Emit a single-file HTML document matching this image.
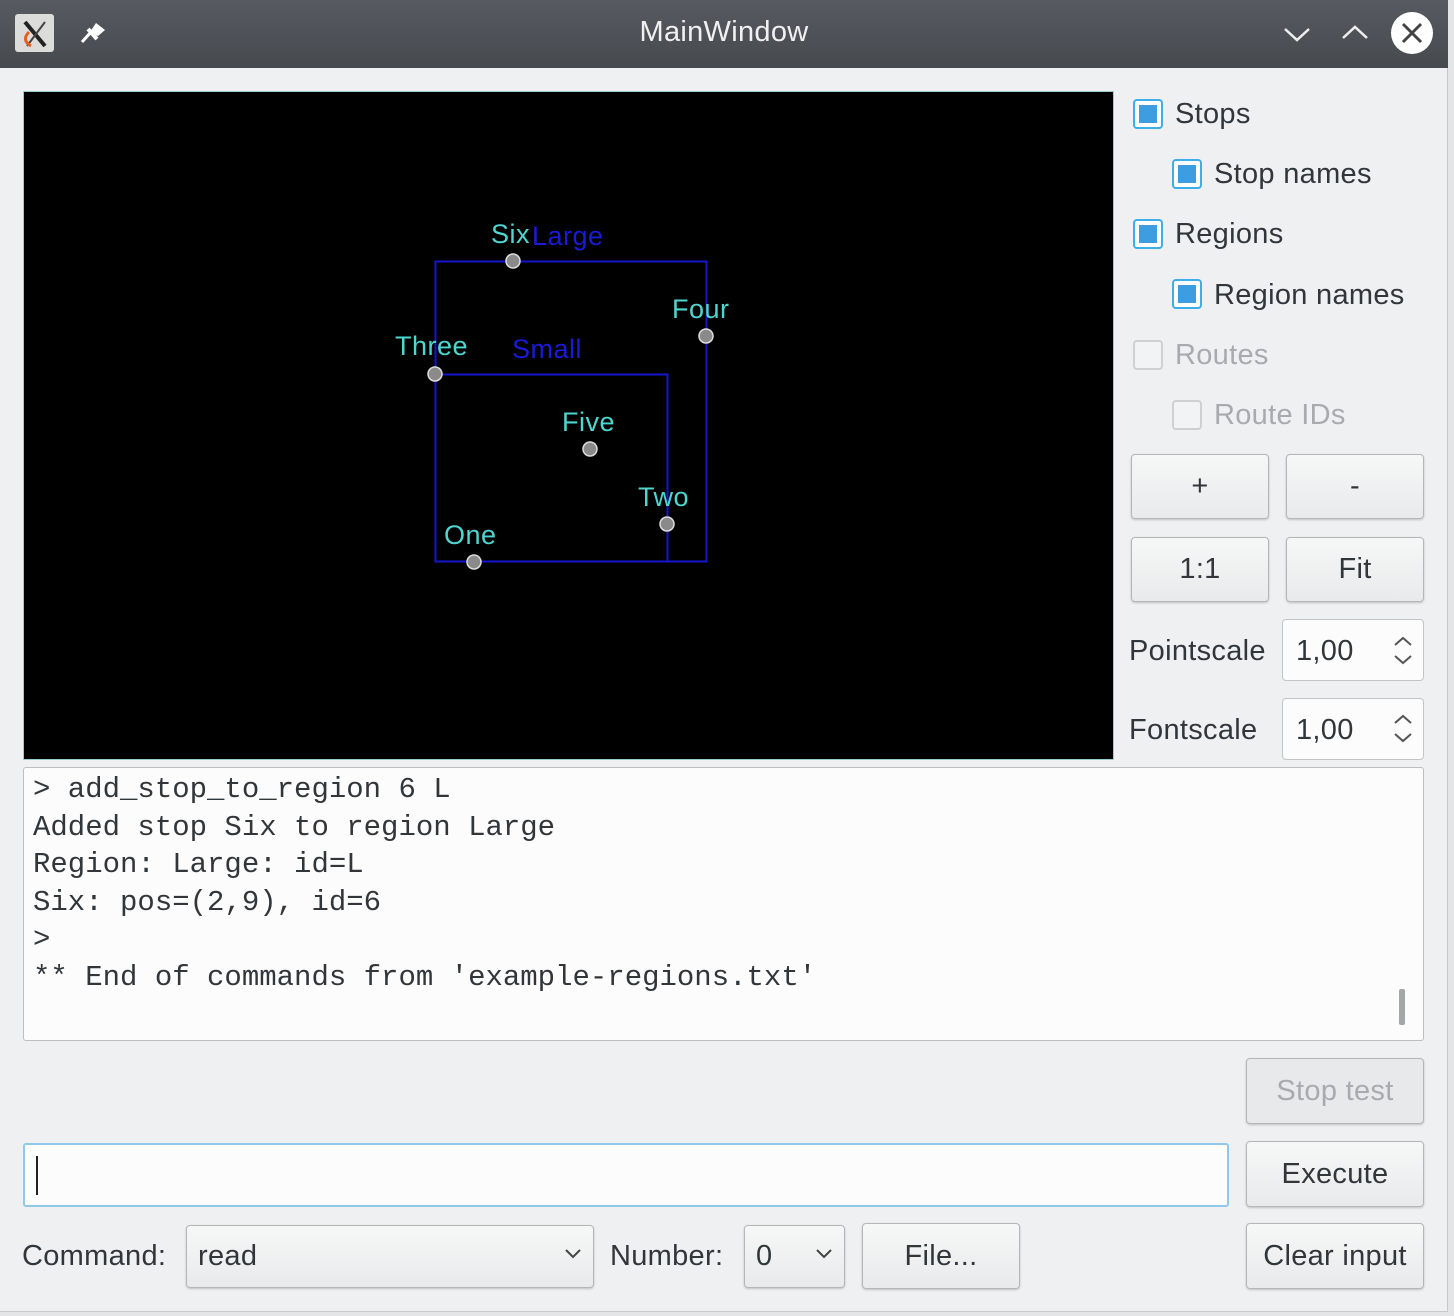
<!DOCTYPE html>
<html><head><meta charset="utf-8"><style>
*{margin:0;padding:0;box-sizing:border-box}
body{width:1454px;height:1316px;background:#e4e5e6;position:relative;overflow:hidden;font-family:"Liberation Sans","DejaVu Sans",sans-serif;color:#31363b}
.a{position:absolute}
#win{left:0;top:0;width:1448px;height:1312px;background:#eff0f1;border-right:1px solid #c8c9ca;border-bottom:1px solid #c8c9ca}
#title{left:0;top:0;width:1448px;height:68px;background:linear-gradient(#575b61,#464a4f)}
.t{font-size:29px;letter-spacing:0.3px;white-space:nowrap}
.cb{width:30px;height:30px;border:2px solid #3daee9;border-radius:4px;background:#fff}
.cb::after{content:"";position:absolute;left:4px;top:4px;width:18px;height:18px;background:#3d9de0}
.cbd{width:30px;height:30px;border:2px solid #cfd0d1;border-radius:4px;background:#f2f3f4}
.btn{border:1px solid #b4b6b8;border-radius:4px;background:linear-gradient(#f6f7f7,#e9eaeb);box-shadow:0 1px 2px rgba(0,0,0,.2);display:flex;align-items:center;justify-content:center;font-size:29px;letter-spacing:0.3px}
.inp{background:#fcfcfc;border:1px solid #c2c4c6;border-radius:4px}
.mono{font-family:"Liberation Mono",monospace;font-size:29px;line-height:37.5px;white-space:pre;color:#31363b}
.lbl{fill:#4fd6d0;font-family:"Liberation Sans",sans-serif;font-size:27px;letter-spacing:0.5px}
</style></head><body>
<div id="win" class="a"></div>
<div id="title" class="a"></div>
<div class="a" style="left:15px;top:14px;width:39px;height:38px;background:#dcdcda;border-radius:3px"></div>
<svg class="a" style="left:15px;top:14px" width="39" height="38"><path d="M10 8 L30 32" stroke="#222" stroke-width="4"/><path d="M30 8 L12 32" stroke="#444" stroke-width="2"/><path d="M14 18 Q6 26 16 32" stroke="#e06020" stroke-width="3" fill="none"/></svg>
<svg class="a" style="left:78px;top:20px" width="30" height="26"><path d="M18 3 L27 10 L20 16 L12 12 Z" fill="#fff"/><path d="M13 12 L4 22" stroke="#fff" stroke-width="3"/><path d="M10 9 L19 19" stroke="#fff" stroke-width="4"/></svg>
<div class="a t" style="left:0;width:1448px;top:16px;text-align:center;color:#f0f0f0;font-size:29px">MainWindow</div>
<svg class="a" style="left:1282px;top:24px" width="30" height="20"><path d="M3 5 L15 16 L27 5" stroke="#eee" stroke-width="2.5" fill="none"/></svg>
<svg class="a" style="left:1340px;top:22px" width="30" height="20"><path d="M3 16 L15 5 L27 16" stroke="#eee" stroke-width="2.5" fill="none"/></svg>
<svg class="a" style="left:1390px;top:11px" width="44" height="44"><circle cx="22" cy="22" r="21" fill="#fff"/><path d="M13 13 L31 31 M31 13 L13 31" stroke="#444" stroke-width="3"/></svg>

<div class="a" style="left:23px;top:91px;width:1091px;height:669px;background:#000;border:1px solid #9cc"></div>
<svg class="a" style="left:24px;top:92px" width="1089" height="667">
<rect x="411.5" y="169.5" width="271" height="300" fill="none" stroke="#1515d0" stroke-width="2"/>
<rect x="411.5" y="282.5" width="232" height="187" fill="none" stroke="#1515d0" stroke-width="2"/>
<text x="508" y="153" font-size="27" fill="#1a1ad8" font-family="Liberation Sans" letter-spacing="0.5">Large</text>
<text x="488" y="266" font-size="27" fill="#1a1ad8" font-family="Liberation Sans" letter-spacing="0.5">Small</text>
<text class="lbl" x="467" y="151">Six</text>
<text class="lbl" x="648" y="226">Four</text>
<text class="lbl" x="371" y="263">Three</text>
<text class="lbl" x="538" y="339">Five</text>
<text class="lbl" x="614" y="414">Two</text>
<text class="lbl" x="420" y="452">One</text>
<g fill="#8a8a8a" stroke="#ddd" stroke-width="1.5">
<circle cx="489" cy="169" r="7"/><circle cx="682" cy="244" r="7"/><circle cx="411" cy="282" r="7"/><circle cx="566" cy="357" r="7"/><circle cx="643" cy="432" r="7"/><circle cx="450" cy="470" r="7"/></g>
</svg>

<div class="a cb" style="left:1133px;top:99px"></div><div class="a t" style="left:1175px;top:98px">Stops</div>
<div class="a cb" style="left:1172px;top:159px"></div><div class="a t" style="left:1214px;top:158px">Stop names</div>
<div class="a cb" style="left:1133px;top:219px"></div><div class="a t" style="left:1175px;top:218px">Regions</div>
<div class="a cb" style="left:1172px;top:279px"></div><div class="a t" style="left:1214px;top:279px">Region names</div>
<div class="a cbd" style="left:1133px;top:340px"></div><div class="a t" style="left:1175px;top:339px;color:#a8abad">Routes</div>
<div class="a cbd" style="left:1172px;top:400px"></div><div class="a t" style="left:1214px;top:399px;color:#a8abad">Route IDs</div>

<div class="a btn" style="left:1131px;top:454px;width:138px;height:65px">+</div>
<div class="a btn" style="left:1286px;top:454px;width:138px;height:65px">-</div>
<div class="a btn" style="left:1131px;top:537px;width:138px;height:65px">1:1</div>
<div class="a btn" style="left:1286px;top:537px;width:138px;height:65px">Fit</div>
<div class="a t" style="left:1129px;top:635px">Pointscale</div>
<div class="a inp" style="left:1282px;top:619px;width:142px;height:62px"></div>
<div class="a t" style="left:1296px;top:635px">1,00</div>
<svg class="a" style="left:1390px;top:634px" width="26" height="34"><path d="M5 11 L13 4 L21 11 M5 22 L13 29 L21 22" stroke="#555" stroke-width="2" fill="none"/></svg>
<div class="a t" style="left:1129px;top:714px">Fontscale</div>
<div class="a inp" style="left:1282px;top:698px;width:142px;height:62px"></div>
<div class="a t" style="left:1296px;top:714px">1,00</div>
<svg class="a" style="left:1390px;top:712px" width="26" height="34"><path d="M5 11 L13 4 L21 11 M5 22 L13 29 L21 22" stroke="#555" stroke-width="2" fill="none"/></svg>

<div class="a" style="left:23px;top:767px;width:1401px;height:274px;background:#fcfcfc;border:1px solid #bcbec0;border-radius:3px"></div>
<div class="a mono" style="left:33px;top:771px">&gt; add_stop_to_region 6 L
Added stop Six to region Large
Region: Large: id=L
Six: pos=(2,9), id=6
&gt;
** End of commands from 'example-regions.txt'</div>
<div class="a" style="left:1399px;top:989px;width:6px;height:36px;background:#a4a6a8;border-radius:2px"></div>

<div class="a btn" style="left:1246px;top:1058px;width:178px;height:66px;color:#a8abad;background:#e8e9ea">Stop test</div>
<div class="a" style="left:23px;top:1143px;width:1206px;height:64px;background:#fcfcfc;border:2px solid #8fc8e8;border-radius:3px"></div>
<div class="a" style="left:36px;top:1156px;width:2px;height:39px;background:#222"></div>
<div class="a btn" style="left:1246px;top:1141px;width:178px;height:66px">Execute</div>
<div class="a t" style="left:22px;top:1240px">Command:</div>
<div class="a btn" style="left:186px;top:1225px;width:408px;height:63px;justify-content:flex-start;padding-left:11px">read</div>
<svg class="a" style="left:563px;top:1247px" width="20" height="14"><path d="M3 3 L10 10 L17 3" stroke="#444" stroke-width="2" fill="none"/></svg>
<div class="a t" style="left:610px;top:1240px">Number:</div>
<div class="a btn" style="left:744px;top:1225px;width:101px;height:63px;justify-content:flex-start;padding-left:11px">0</div>
<svg class="a" style="left:814px;top:1247px" width="20" height="14"><path d="M3 3 L10 10 L17 3" stroke="#444" stroke-width="2" fill="none"/></svg>
<div class="a btn" style="left:862px;top:1223px;width:158px;height:66px">File...</div>
<div class="a btn" style="left:1246px;top:1223px;width:178px;height:66px">Clear input</div>
</body></html>
